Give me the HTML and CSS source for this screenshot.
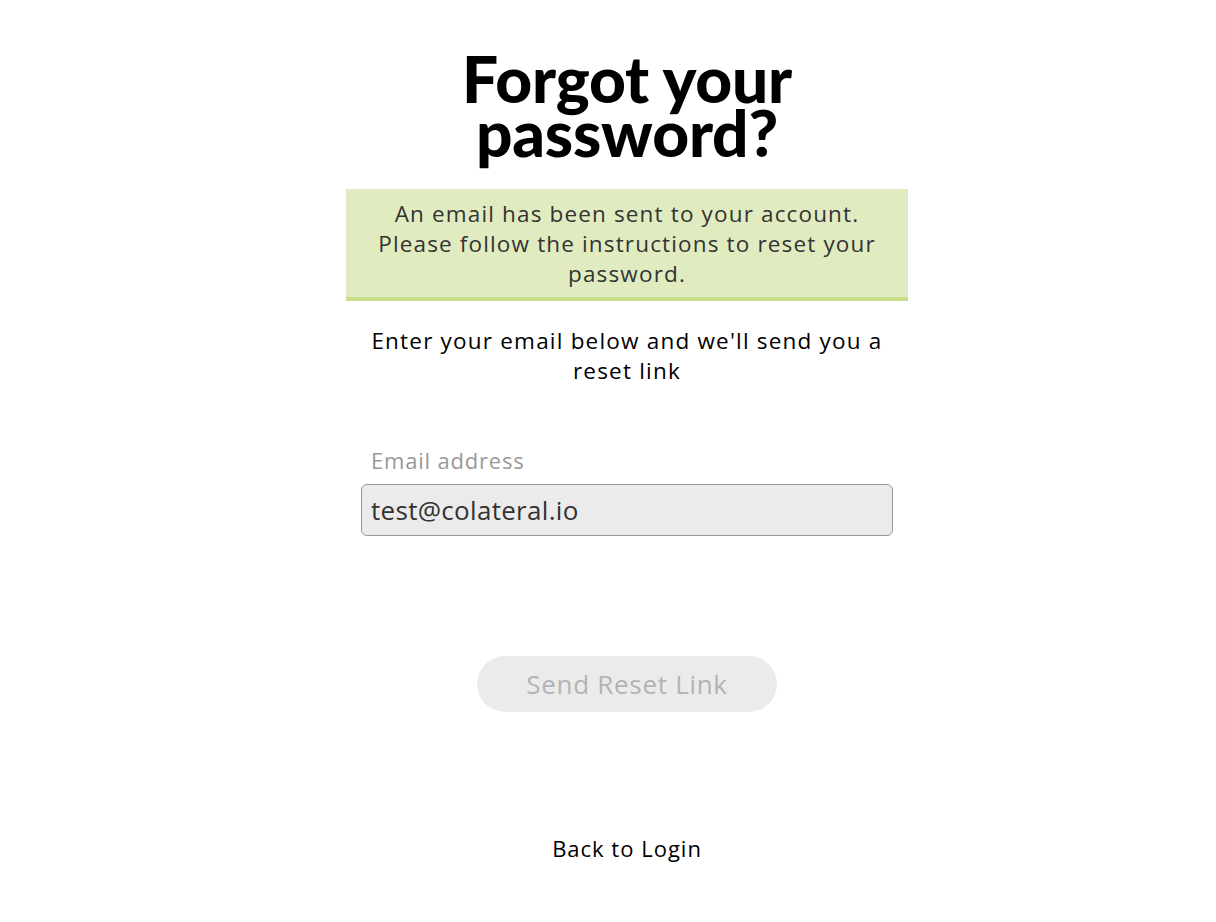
FILE: index.html
```html
<!DOCTYPE html>
<html lang="en">
<head>
<meta charset="utf-8">
<title>Forgot your password?</title>
<link rel="stylesheet" href="styles.css">
</head>
<body>
<div class="page">
  <main class="card">
    <h1 class="title">Forgot your password?</h1>
    <div class="alert">An email has been sent to your account. Please follow the instructions to reset your password.</div>
    <p class="intro">Enter your email below and we'll send you a reset link</p>
    <form class="form">
      <label class="label" for="email">Email address</label>
      <input class="input" id="email" type="email" value="test@colateral.io">
      <div class="actions">
        <button class="btn" type="button" disabled>Send Reset Link</button>
      </div>
    </form>
    <a class="back" href="#">Back to Login</a>
  </main>
</div>
</body>
</html>
```
FILE: styles.css
```css
html, body {
  margin: 0;
  padding: 0;
  background: #fff;
}
body {
  font-family: "Open Sans", "Noto Sans", sans-serif;
  color: #000;
}
.page {
  padding-left: 38px;
  display: flex;
  justify-content: center;
}
.card {
  width: 562px;
  display: flex;
  flex-direction: column;
  align-items: stretch;
  text-align: center;
  padding-top: 52px;
}
.title {
  margin: 0 auto;
  width: 360px;
  font-family: Lato, sans-serif;
  font-size: 64px;
  font-weight: 900;
  line-height: 54px;
  letter-spacing: -0.2px;
}
.alert {
  margin-top: 29px;
  background: #e0ebc0;
  border-bottom: 4px solid #c9de8a;
  color: #333;
  font-size: 22.5px;
  letter-spacing: 1.15px;
  line-height: 30px;
  padding: 10px 20px 8px;
}
.intro {
  margin: 25px 0 0;
  padding: 0 20px;
  font-size: 22.5px;
  letter-spacing: 1.2px;
  line-height: 30px;
}
.form {
  display: flex;
  flex-direction: column;
  padding: 0 15px;
  margin-top: 59px;
}
.label {
  text-align: left;
  padding-left: 10px;
  color: #999;
  font-size: 22px;
  letter-spacing: 0.8px;
  line-height: 30px;
}
.input {
  margin-top: 9px;
  height: 52px;
  box-sizing: border-box;
  background: #ebebeb;
  border: 1px solid #999;
  border-radius: 6px;
  padding: 0 9px;
  font-family: inherit;
  font-size: 26px;
  letter-spacing: 0.3px;
  color: #333;
  outline: none;
}
.actions {
  display: flex;
  justify-content: center;
  margin-top: 120px;
}
.btn {
  width: 300px;
  height: 56px;
  border: none;
  border-radius: 28px;
  background: #ebebeb;
  color: #b3b3b3;
  font-family: inherit;
  font-size: 26px;
  letter-spacing: 0.7px;
}
.back {
  margin-top: 121px;
  color: #000;
  text-decoration: none;
  font-size: 22px;
  letter-spacing: 1px;
  line-height: 30px;
  align-self: center;
}
```
